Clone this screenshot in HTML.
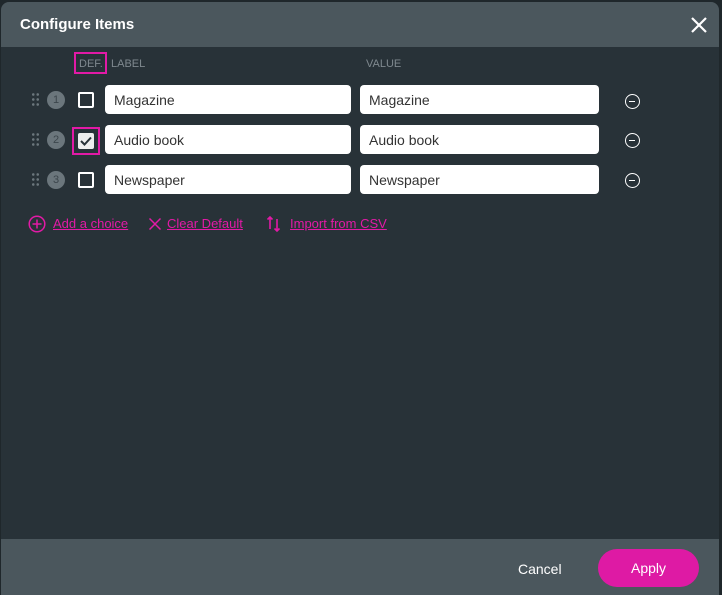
<!DOCTYPE html>
<html><head><style>
*{box-sizing:border-box;margin:0;padding:0}
body{width:722px;height:595px;background:#1f272b;font-family:"Liberation Sans",sans-serif;position:relative;overflow:hidden}
.dlg{position:absolute;left:1px;top:2px;width:718px;height:593px;background:#283238;border-radius:8px 8px 0 0;overflow:hidden}
.hd{position:absolute;left:0;top:0;width:100%;height:45px;background:#4b575d}
.hd h1{position:absolute;left:19px;top:14px;font-size:15px;font-weight:bold;color:#fff}
.lbl{position:absolute;top:56px;font-size:11px;color:#7f898f}
.inp{position:absolute;height:29px;background:#fff;border-radius:4px;font-size:14px;color:#333;padding:7px 0 0 9px}
.num{position:absolute;left:46px;width:18px;height:18px;border-radius:50%;background:#6b767c;color:#3c464c;font-size:11px;display:flex;align-items:center;justify-content:center}
.cb{position:absolute;left:77px;width:16px;height:16px;border:2px solid #fff;border-radius:2px}
.dots{position:absolute;left:30px;width:9px;height:15px;background-image:radial-gradient(circle,#6b767c 1.2px,transparent 1.4px);background-size:4.5px 5px}
.minus{position:absolute;left:624px;width:15px;height:15px;border:1.3px solid #fff;border-radius:50%}
.minus:after{content:"";position:absolute;left:3px;top:5.5px;width:6px;height:1.3px;background:#fff}
.lk{position:absolute;top:214px;font-size:13px;color:#e21aa6;text-decoration:underline}
.ft{position:absolute;left:0;top:537px;width:100%;height:60px;background:#4b575d}
</style></head><body>
<div class="dlg">
<div class="hd"><h1>Configure Items</h1>
<svg style="position:absolute;left:690px;top:15px" width="16" height="16"><path d="M1 1L15 15M15 1L1 15" stroke="#fff" stroke-width="2.2"/></svg></div>
<div style="position:absolute;left:73px;top:50px;width:33px;height:22px;border:2px solid #e21aa6"></div>
<div class="lbl" style="left:78px">DEF.</div>
<div class="lbl" style="left:110px">LABEL</div>
<div class="lbl" style="left:365px">VALUE</div>

<div class="dots" style="top:90px"></div><div class="num" style="top:89px">1</div><div class="cb" style="top:90px"></div>
<div class="inp" style="left:104px;top:83px;width:246px">Magazine</div>
<div class="inp" style="left:359px;top:83px;width:239px">Magazine</div>
<div class="minus" style="top:92px"></div>

<div class="dots" style="top:130px"></div><div class="num" style="top:129px">2</div>
<div style="position:absolute;left:71px;top:125px;width:28px;height:28px;border:2px solid #e21aa6;background:#283238"></div>
<div style="position:absolute;left:77px;top:131px;width:16px;height:16px;background:#eee;border-radius:2px"></div>
<svg style="position:absolute;left:77px;top:131px" width="16" height="16"><path d="M3 8L6.5 11.5L13 4.5" stroke="#283238" stroke-width="2" fill="none"/></svg>
<div class="inp" style="left:104px;top:123px;width:246px">Audio book</div>
<div class="inp" style="left:359px;top:123px;width:239px">Audio book</div>
<div class="minus" style="top:131px"></div>

<div class="dots" style="top:170px"></div><div class="num" style="top:169px">3</div><div class="cb" style="top:170px"></div>
<div class="inp" style="left:104px;top:163px;width:246px">Newspaper</div>
<div class="inp" style="left:359px;top:163px;width:239px">Newspaper</div>
<div class="minus" style="top:171px"></div>

<svg style="position:absolute;left:27px;top:213px" width="18" height="18"><circle cx="9" cy="9" r="7.8" stroke="#e21aa6" stroke-width="1.5" fill="none"/><path d="M9 4.5V13.5M4.5 9H13.5" stroke="#e21aa6" stroke-width="1.5"/></svg>
<div class="lk" style="left:52px">Add a choice</div>
<svg style="position:absolute;left:147px;top:215px" width="14" height="14"><path d="M1.5 1.5L12.5 12.5M12.5 1.5L1.5 12.5" stroke="#e21aa6" stroke-width="1.5"/></svg>
<div class="lk" style="left:166px">Clear Default</div>
<svg style="position:absolute;left:265px;top:213px" width="16" height="18"><path d="M4 14V2M1.5 4.5L4 2L6.5 4.5M11 4V16M8.5 13.5L11 16L13.5 13.5" stroke="#e21aa6" stroke-width="1.6" fill="none"/></svg>
<div class="lk" style="left:289px">Import from CSV</div>

<div class="ft">
<div style="position:absolute;left:517px;top:22px;font-size:14px;color:#fff">Cancel</div>
<div style="position:absolute;left:597px;top:10px;width:101px;height:38px;border-radius:19px;background:#de1aa4;color:#fff;font-size:14px;text-align:center;line-height:38px">Apply</div>
</div>
</div>
</body></html>
